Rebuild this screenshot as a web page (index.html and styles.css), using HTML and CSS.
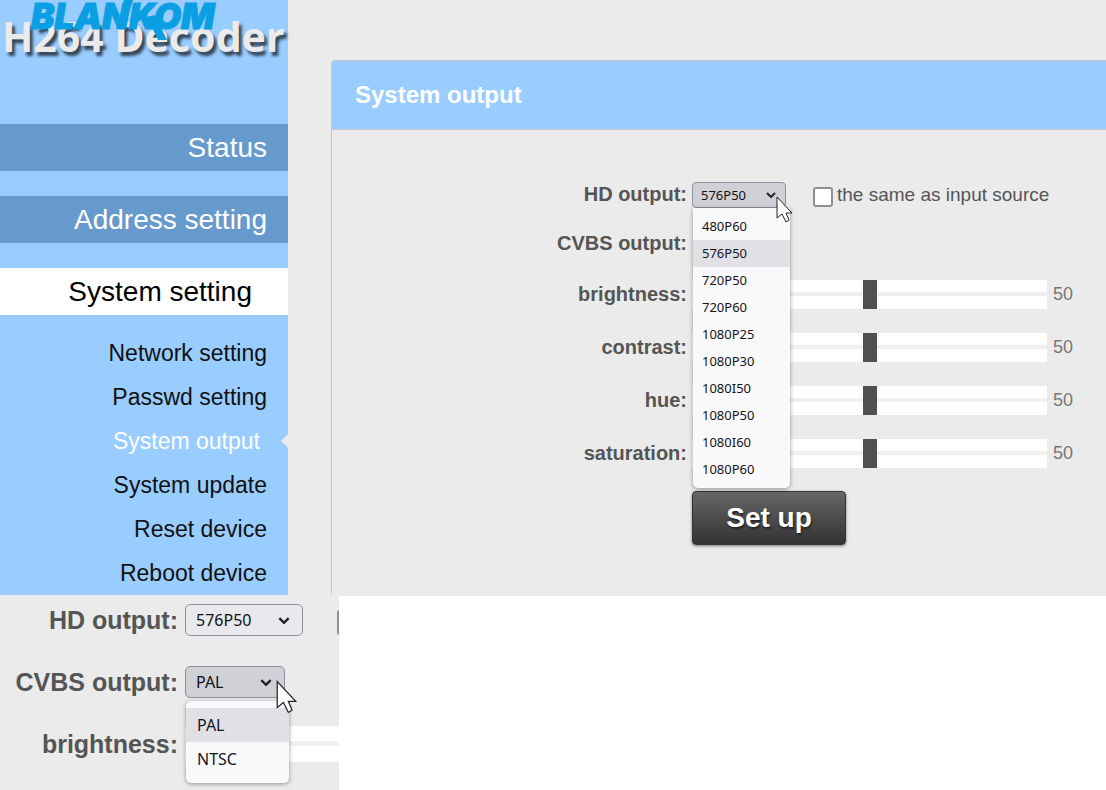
FILE: index.html
```html
<!DOCTYPE html>
<html lang="en">
<head>
    <meta charset="UTF-8">
    <meta name="viewport" content="width=device-width, initial-scale=1.0">
    <title>H264 Decoder</title>
    <link rel="stylesheet" href="styles.css">
</head>
<body>
    <div class="page">
        <aside class="sidebar">
            <header class="brand">
                <h1>H264 Decoder</h1>
                <svg class="logo" width="200" height="46" viewBox="0 0 200 46" role="img" aria-label="BLANKOM">
                    <text x="1" y="29">BLANKOM</text>
                    <path d="M94 0h9l-9 29h-8z"/>
                    <path d="M117 17l8-2 12 25h-9z"/>
                </svg>
            </header>
            <nav>
                <ul class="menu">
                    <li><a href="#status">Status</a></li>
                    <li><a href="#address">Address setting</a></li>
                    <li><a href="#system" class="open">System setting</a></li>
                </ul>
                <ul class="submenu">
                    <li><a href="#network">Network setting</a></li>
                    <li><a href="#passwd">Passwd setting</a></li>
                    <li><a href="#output" class="active">System output</a></li>
                    <li><a href="#update">System update</a></li>
                    <li><a href="#reset">Reset device</a></li>
                    <li><a href="#reboot">Reboot device</a></li>
                </ul>
            </nav>
        </aside>
        <main class="content">
            <h2>System output</h2>
            <form class="settings">
                <div class="row">
                    <label class="name" for="hd">HD output:</label>
                    <div class="picker pressed">
                        <select id="hd">
                            <option>480P60</option>
                            <option selected>576P50</option>
                            <option>720P50</option>
                            <option>720P60</option>
                            <option>1080P25</option>
                            <option>1080P30</option>
                            <option>1080I50</option>
                            <option>1080P50</option>
                            <option>1080I60</option>
                            <option>1080P60</option>
                        </select>
                        <svg class="chevron" viewBox="0 0 10 6"><path d="M1 1l4 4 4-4"/></svg>
                        <ul class="options">
                            <li>480P60</li>
                            <li class="selected">576P50</li>
                            <li>720P50</li>
                            <li>720P60</li>
                            <li>1080P25</li>
                            <li>1080P30</li>
                            <li>1080I50</li>
                            <li>1080P50</li>
                            <li>1080I60</li>
                            <li>1080P60</li>
                        </ul>
                        <svg class="cursor" viewBox="0 0 17 27"><path d="M1 1v21l5-4 4 8 3-2-3-7h6z"/></svg>
                    </div>
                    <input type="checkbox" id="same">
                    <label class="note" for="same">the same as input source</label>
                </div>
                <div class="row">
                    <label class="name" for="cvbs">CVBS output:</label>
                    <div class="picker">
                        <select id="cvbs" class="short">
                            <option>PAL</option>
                            <option>NTSC</option>
                        </select>
                    </div>
                </div>
                <div class="row slide">
                    <label class="name" for="brightness">brightness:</label>
                    <input type="range" id="brightness" min="0" max="100" value="50">
                    <output for="brightness">50</output>
                </div>
                <div class="row slide">
                    <label class="name" for="contrast">contrast:</label>
                    <input type="range" id="contrast" min="0" max="100" value="50">
                    <output for="contrast">50</output>
                </div>
                <div class="row slide">
                    <label class="name" for="hue">hue:</label>
                    <input type="range" id="hue" min="0" max="100" value="50">
                    <output for="hue">50</output>
                </div>
                <div class="row slide">
                    <label class="name" for="saturation">saturation:</label>
                    <input type="range" id="saturation" min="0" max="100" value="50">
                    <output for="saturation">50</output>
                </div>
                <button type="button">Set up</button>
            </form>
        </main>
    </div>

    <!-- enlarged detail of the CVBS list -->
    <section class="detail">
        <div class="row">
            <label class="name" for="hd2">HD output:</label>
            <div class="picker wide">
                <select id="hd2">
                    <option>576P50</option>
                </select>
                <svg class="chevron" viewBox="0 0 10 6"><path d="M1 1l4 4 4-4"/></svg>
            </div>
            <input type="checkbox" aria-label="the same as input source">
        </div>
        <div class="row">
            <label class="name" for="cvbs2">CVBS output:</label>
            <div class="picker pressed">
                <select id="cvbs2">
                    <option>PAL</option>
                    <option>NTSC</option>
                </select>
                <svg class="chevron" viewBox="0 0 10 6"><path d="M1 1l4 4 4-4"/></svg>
                <ul class="options">
                    <li class="selected">PAL</li>
                    <li>NTSC</li>
                </ul>
                <svg class="cursor" viewBox="0 0 17 27"><path d="M1 1v21l5-4 4 8 3-2-3-7h6z"/></svg>
            </div>
        </div>
        <div class="row">
            <label class="name" for="brightness2">brightness:</label>
            <input type="range" id="brightness2" min="0" max="100" value="50">
        </div>
    </section>
</body>
</html>
```
FILE: styles.css
```css
* {
    box-sizing: border-box;
}
body {
    margin: 0;
    background-color: #fff;
    font-family: "Liberation Sans", Arial, sans-serif;
    color: #555;
}
ul {
    list-style: none;
    margin: 0;
    padding: 0;
}
a {
    text-decoration: none;
}
.page {
    display: flex;
    background-color: #ebebeb;
    padding-bottom: 1px;
    overflow: hidden;
}

/* Sidebar */
.sidebar {
    flex: 0 0 288px;
    background-color: #9cf;
}
.brand {
    position: relative;
    height: 124px;
    padding: 16px 0 0 2px;
}
.brand h1 {
    margin: 0;
    font-family: "Noto Sans", "Open Sans", sans-serif;
    font-size: 41px;
    line-height: 40px;
    color: #ebebeb;
    white-space: nowrap;
    text-shadow: 3px 4px 3px #345;
}
.logo {
    position: absolute;
    top: 0;
    left: 30px;
    overflow: visible;
    fill: #0a9fe3;
}
.logo text {
    font-family: Inter, sans-serif;
    font-size: 35px;
    font-weight: 900;
    font-style: italic;
    stroke: #0a9fe3;
    stroke-width: 1;
}
.menu {
    display: flex;
    flex-direction: column;
    gap: 25px;
}
.menu a {
    display: block;
    padding-right: 21px;
    background-color: #69c;
    color: #fff;
    font-size: 28px;
    line-height: 47px;
    text-align: right;
}
.menu .open {
    padding-right: 36px;
    background-color: #fff;
    color: #000;
}
.submenu {
    padding-top: 16px;
}
.submenu a {
    display: block;
    position: relative;
    padding-right: 21px;
    color: #111;
    font-size: 23px;
    line-height: 44px;
    text-align: right;
}
.submenu .active {
    padding-right: 28px;
    color: #fff;
}
.submenu .active::after {
    content: "";
    position: absolute;
    right: 0;
    top: 15px;
    border: 7px solid transparent;
    border-left: 0;
    border-right-color: #ebebeb;
}

/* Main panel */
.content {
    flex: 1;
    margin: 60px 0 0 43px;
    border: 1px solid #c8c8c8;
    border-width: 1px 0 0 1px;
    border-top-left-radius: 4px;
}
.content h2 {
    margin: 0;
    padding-left: 23px;
    background-color: #9cf;
    border-bottom: 1px solid #c8c8c8;
    border-top-left-radius: 3px;
    color: #fff;
    font-size: 24px;
    line-height: 68px;
}
.settings {
    padding-top: 40px;
}
.row {
    display: flex;
    align-items: center;
    height: 49px;
}
.slide {
    height: 53px;
}
.name {
    flex: 0 0 355px;
    margin-right: 5px;
    font-size: 20px;
    font-weight: bold;
    text-align: right;
}
.note {
    font-size: 19px;
    white-space: nowrap;
}
.slide output {
    margin-left: 6px;
    font-size: 18px;
    color: #777;
}

/* Form controls */
.picker {
    position: relative;
}
.picker select {
    appearance: none;
    display: block;
    width: 94px;
    height: 26px;
    padding: 0 8px;
    border: 1px solid #8f8f9d;
    border-radius: 4px;
    background-color: #e9e9ed;
    color: #111;
    font-family: "Noto Sans", "Open Sans", sans-serif;
    font-size: 13px;
}
.picker .short {
    width: 80px;
    margin-left: 4px;
}
.pressed select {
    background-color: #d0d0d7;
}
.chevron {
    position: absolute;
    right: 10px;
    top: 10px;
    width: 10px;
    height: 6px;
    pointer-events: none;
}
.chevron path {
    fill: none;
    stroke: #222;
    stroke-width: 2;
}
.options {
    position: absolute;
    z-index: 2;
    top: 100%;
    left: 1px;
    width: 97px;
    padding: 5px 0;
    border-radius: 0 0 5px 5px;
    background-color: #f9f9fb;
    box-shadow: 0 1px 4px rgba(0, 0, 0, 0.4);
    color: #15141a;
    font-family: "Noto Sans", "Open Sans", sans-serif;
    font-size: 13px;
    line-height: 27px;
}
.options li {
    padding-left: 9px;
}
.options .selected {
    background-color: #e0e0e6;
}
.cursor {
    position: absolute;
    z-index: 3;
    top: 14px;
    left: 84px;
    width: 17px;
    height: 27px;
}
.cursor path {
    fill: #fff;
    stroke: #222;
    stroke-width: 1;
}
input[type="checkbox"] {
    appearance: none;
    flex: none;
    width: 20px;
    height: 20px;
    margin: 4px 4px 0 27px;
    border: 2px solid #8f8f8f;
    border-radius: 3px;
    background-color: #fff;
}
input[type="range"] {
    appearance: none;
    flex: none;
    width: 355px;
    height: 29px;
    margin: 0;
    background: linear-gradient(#fff 12px, #f0f0f0 12px, #f0f0f0 16px, #fff 16px);
}
input[type="range"]::-webkit-slider-thumb {
    appearance: none;
    width: 14px;
    height: 29px;
    background-color: #505050;
}
.settings button {
    display: block;
    width: 154px;
    height: 54px;
    margin: 11px 0 50px 360px;
    padding: 0;
    border: 1px solid #333;
    border-radius: 4px;
    background: linear-gradient(#666, #333);
    box-shadow: 0 1px 3px rgba(0, 0, 0, 0.5);
    color: #fff;
    font-family: "Liberation Sans", Arial, sans-serif;
    font-size: 28px;
    font-weight: bold;
    text-shadow: 1px 2px 2px #222;
}

/* Enlarged detail */
.detail {
    display: flex;
    flex-direction: column;
    gap: 30px;
    width: 339px;
    padding: 8px 0 30px;
    background-color: #ebebeb;
    overflow: hidden;
}
.detail .row {
    height: 32px;
}
.detail .name {
    flex-basis: 178px;
    margin-right: 7px;
    font-size: 25px;
}
.detail select {
    width: 100px;
    height: 32px;
    padding: 0 10px;
    border-radius: 5px;
    font-size: 16px;
}
.detail .wide select {
    width: 118px;
}
.detail .chevron {
    top: 13px;
    right: 13px;
    width: 12px;
    height: 7px;
}
.detail .options {
    top: 35px;
    width: 103px;
    padding: 7px 0;
    border-radius: 5px;
    font-size: 16px;
    line-height: 34px;
}
.detail .options li {
    padding-left: 11px;
}
.detail .cursor {
    left: 91px;
    width: 21px;
    height: 34px;
}
.detail input[type="checkbox"] {
    width: 25px;
    height: 25px;
    margin-left: 34px;
}
.detail input[type="range"] {
    height: 36px;
    background: linear-gradient(#fff 15px, #f0f0f0 15px, #f0f0f0 20px, #fff 20px);
}
```
